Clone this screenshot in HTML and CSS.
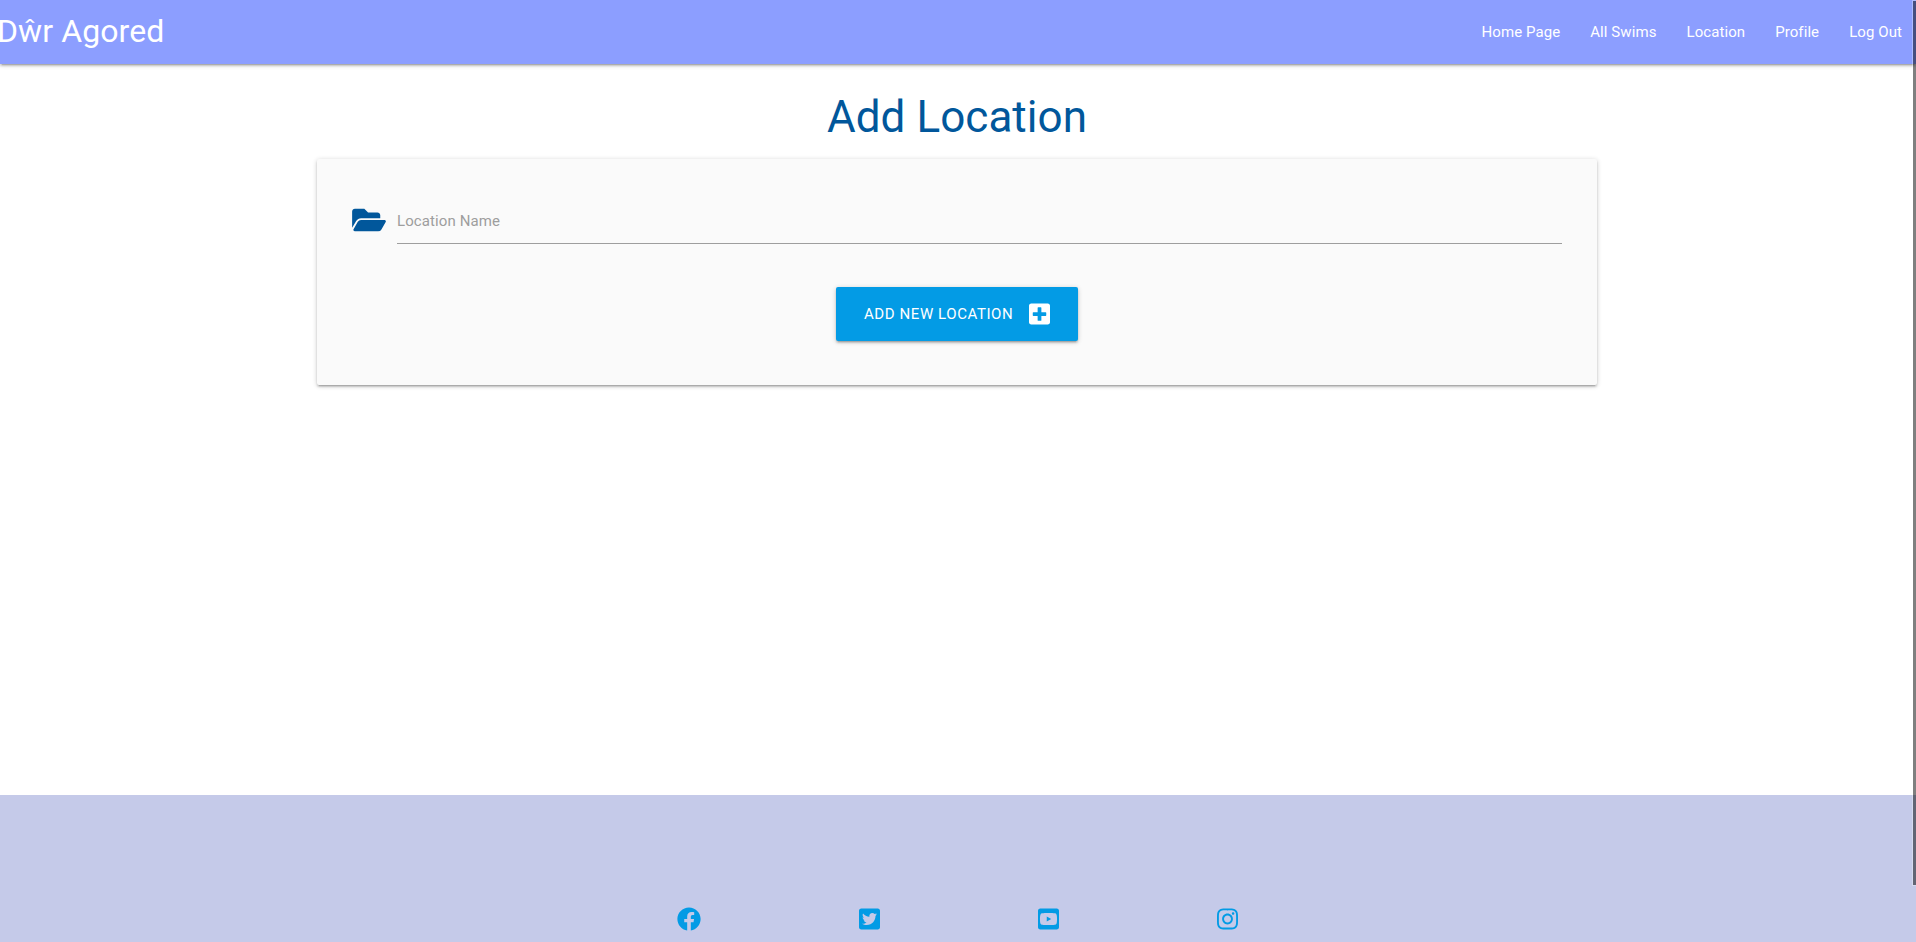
FILE: index.html
```html
<!DOCTYPE html>
<html lang="en">
<head>
<meta charset="utf-8">
<title>Dŵr Agored</title>
<link rel="stylesheet" href="styles.css">
</head>
<body>
<nav class="navbar">
  <a class="brand">Dŵr Agored</a>
  <ul class="nav-links">
    <li>Home Page</li><li>All Swims</li><li>Location</li><li>Profile</li><li>Log Out</li>
  </ul>
</nav>
<main class="container">
  <h3 class="title">Add Location</h3>
  <form class="card">
    <div class="field">
      <svg class="folder" viewBox="0 0 576 512"><path d="M572.694 292.093L500.27 416.248A63.997 63.997 0 0 1 444.989 448H45.025c-18.523 0-30.064-20.093-20.731-36.093l72.424-124.155A64 64 0 0 1 152 256h399.964c18.523 0 30.064 20.093 20.73 36.093zM152 224h328v-48c0-26.51-21.49-48-48-48H272l-64-64H48C21.49 64 0 85.49 0 112v278.046l69.077-118.418C86.214 242.25 117.989 224 152 224z"/></svg>
      <label class="input">Location Name</label>
    </div>
    <button type="button" class="btn"><span>Add New Location</span>
      <svg class="icon" viewBox="0 0 448 512"><path d="M400 32H48C21.5 32 0 53.5 0 80v352c0 26.5 21.5 48 48 48h352c26.5 0 48-21.5 48-48V80c0-26.5-21.5-48-48-48zm-32 252c0 6.6-5.4 12-12 12h-92v92c0 6.6-5.4 12-12 12h-56c-6.6 0-12-5.4-12-12v-92H92c-6.6 0-12-5.4-12-12v-56c0-6.6 5.4-12 12-12h92v-92c0-6.6 5.4-12 12-12h56c6.6 0 12 5.4 12 12v92h92c6.6 0 12 5.4 12 12v56z"/></svg>
    </button>
  </form>
</main>
<footer class="footer">
  <div class="social">
    <a><svg class="icon round" viewBox="0 0 512 512"><path d="M504 256C504 119 393 8 256 8S8 119 8 256c0 123.78 90.69 226.38 209.25 245V327.69h-63V256h63v-54.64c0-62.15 37-96.48 93.67-96.48 27.14 0 55.52 4.84 55.52 4.84v61h-31.28c-30.8 0-40.41 19.12-40.41 38.73V256h68.78l-11 71.69h-57.78V501C413.31 482.38 504 379.78 504 256z"/></svg></a>
    <a><svg class="icon" viewBox="0 0 448 512"><path d="M400 32H48C21.5 32 0 53.5 0 80v352c0 26.5 21.5 48 48 48h352c26.5 0 48-21.5 48-48V80c0-26.5-21.5-48-48-48zm-48.9 158.8c.2 2.8.2 5.7.2 8.5 0 86.7-66 186.6-186.6 186.6-37.2 0-71.7-10.8-100.7-29.4 5.3.6 10.4.8 15.8.8 30.7 0 58.9-10.4 81.4-28-28.8-.6-53-19.5-61.3-45.5 10.1 1.5 19.2 1.5 29.6-1.2-30-6.1-52.5-32.5-52.5-64.4v-.8c8.7 4.9 18.9 7.9 29.6 8.3a65.447 65.447 0 0 1-29.2-54.6c0-12.2 3.2-23.4 8.9-33.1 32.3 39.8 80.8 65.8 135.2 68.6-9.3-44.5 24-80.6 64-80.6 18.9 0 35.9 7.9 47.9 20.7 14.8-2.8 29-8.3 41.6-15.8-4.9 15.2-15.2 28-28.8 36.1 13.2-1.4 26-5.1 37.8-10.2-8.9 13.1-20.1 24.7-32.9 34z"/></svg></a>
    <a><svg class="icon" viewBox="0 0 448 512"><path d="M186.8 202.1l95.2 54.1-95.2 54.1V202.1zM448 80v352c0 26.5-21.5 48-48 48H48c-26.5 0-48-21.5-48-48V80c0-26.5 21.5-48 48-48h352c26.5 0 48 21.5 48 48zm-42 176.3s0-59.6-7.6-88.2c-4.2-15.8-16.5-28.2-32.2-32.4C337.9 128 224 128 224 128s-113.9 0-142.2 7.7c-15.7 4.2-28 16.6-32.2 32.4-7.6 28.5-7.6 88.2-7.6 88.2s0 59.6 7.6 88.2c4.2 15.8 16.5 27.7 32.2 31.9C110.1 384 224 384 224 384s113.9 0 142.2-7.7c15.7-4.2 28-16.1 32.2-31.9 7.6-28.5 7.6-88.1 7.6-88.1z"/></svg></a>
    <a><svg class="icon" viewBox="0 0 448 512"><path d="M224.1 141c-63.6 0-114.9 51.3-114.9 114.9s51.3 114.9 114.9 114.9S339 319.5 339 255.9 287.7 141 224.1 141zm0 189.6c-41.1 0-74.7-33.5-74.7-74.7s33.5-74.7 74.7-74.7 74.7 33.5 74.7 74.7-33.6 74.7-74.7 74.7zm146.4-194.3c0 14.9-12 26.8-26.8 26.8-14.9 0-26.8-12-26.8-26.8s12-26.8 26.8-26.8 26.8 12 26.8 26.8zm76.1 27.2c-1.7-35.9-9.9-67.7-36.2-93.9-26.2-26.2-58-34.4-93.9-36.2-37-2.1-147.9-2.1-184.9 0-35.8 1.7-67.6 9.9-93.9 36.1s-34.4 58-36.2 93.9c-2.1 37-2.1 147.9 0 184.9 1.7 35.9 9.9 67.7 36.2 93.9s58 34.4 93.9 36.2c37 2.1 147.9 2.1 184.9 0 35.9-1.7 67.7-9.9 93.9-36.2 26.2-26.2 34.4-58 36.2-93.9 2.1-37 2.1-147.8 0-184.8zM398.8 388c-7.8 19.6-22.9 34.7-42.6 42.6-29.5 11.7-99.5 9-132.1 9s-102.7 2.6-132.1-9c-19.6-7.8-34.7-22.9-42.6-42.6-11.7-29.5-9-99.5-9-132.1s-2.6-102.7 9-132.1c7.8-19.6 22.9-34.7 42.6-42.6 29.5-11.7 99.5-9 132.1-9s102.7-2.6 132.1 9c19.6 7.8 34.7 22.9 42.6 42.6 11.7 29.5 9 99.5 9 132.1s2.7 102.7-9 132.1z"/></svg></a>
  </div>
</footer>
<div class="scroll-thumb"></div>
</body>
</html>
```
FILE: styles.css
```css
* { box-sizing: border-box; }
html { font: 15px/1.5 Roboto, sans-serif; }
body {
  margin: 0;
  height: 942px;
  overflow: hidden;
  display: flex;
  flex-direction: column;
  background: #fff;
}
.navbar, .card, .btn {
  box-shadow: 0 2px 2px 0 rgba(0,0,0,.14), 0 3px 1px -2px rgba(0,0,0,.12), 0 1px 5px 0 rgba(0,0,0,.2);
}
.navbar {
  flex: none;
  height: 64px;
  line-height: 64px;
  display: flex;
  justify-content: space-between;
  background: #8c9eff;
  color: #fff;
}
.brand { font-size: 32px; line-height: 62px; margin-left: -3px; letter-spacing: .1px; }
.nav-links { display: flex; margin: 0 -1px 0 0; padding: 0; list-style: none; letter-spacing: .08px; }
.nav-links li { padding: 0 15px; }
.container { width: 1280px; margin-left: 317px; flex: 1; }
.title {
  margin: 29px 0 18px;
  font-size: 44px;
  font-weight: 400;
  line-height: 48px;
  letter-spacing: .06px;
  text-align: center;
  color: #01579b;
}
.card {
  height: 226px;
  padding: 39px 35px 0;
  border-radius: 2px;
  background: #fafafa;
  display: flex;
  flex-direction: column;
  align-items: center;
}
.field { width: 100%; display: flex; gap: 11px; }
.folder { width: 34px; height: 30px; margin-top: 7px; fill: #01579b; }
.input {
  flex: 1;
  height: 46px;
  line-height: 46px;
  letter-spacing: .1px;
  border-bottom: 1px solid #9e9e9e;
  color: #9e9e9e;
}
.btn {
  width: 242px;
  height: 54px;
  margin-top: 43px;
  padding: 0 28px;
  border: 0;
  border-radius: 2px;
  display: flex;
  align-items: center;
  justify-content: space-between;
  background: #039be5;
  color: #fff;
  font: 15px Roboto, sans-serif;
  letter-spacing: .58px;
  text-transform: uppercase;
  white-space: nowrap;
}
.icon { width: 21px; height: 24px; fill: currentColor; display: block; }
.icon.round { width: 24px; }
.footer { flex: none; height: 147px; background: #c5cae9; }
.social {
  width: 716px;
  margin-left: 599px;
  padding-top: 112px;
  display: grid;
  grid-template-columns: 179px 183px 175px 182px;
  justify-items: center;
  color: #039be5;
}
.scroll-thumb {
  position: absolute;
  right: 0;
  top: 1px;
  width: 3px;
  height: 884px;
  background: rgba(0,0,0,.5);
  box-shadow: 0 0 0 1px rgba(255,255,255,.3);
}
```
